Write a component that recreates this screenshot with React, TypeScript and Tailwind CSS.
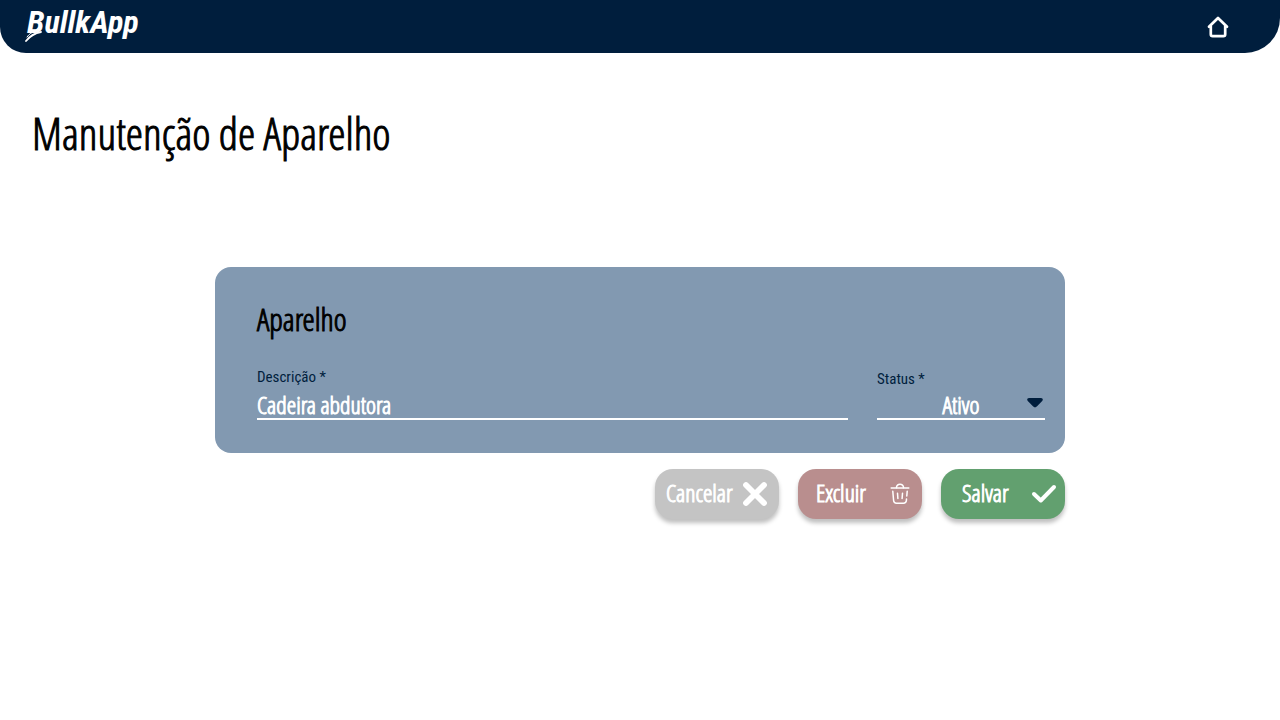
import type { ReactNode } from 'react';

function Logo() {
  return (
    <a
      href="#inicio"
      aria-label="BullkApp"
      className="relative block py-1 pl-[27px] font-['Roboto_Condensed',sans-serif] text-[32px] leading-9 font-bold text-white italic"
    >
      BullkApp
      <svg
        viewBox="0 0 28 14"
        className="absolute top-7 left-6 h-3.5 w-7"
        fill="none"
        stroke="currentColor"
        strokeLinecap="round"
        aria-hidden="true"
      >
        <path d="M17 4C11 5 6 8 2 13" strokeWidth="1.8" />
        <path d="M12 3C8 4 5 6 3 9" strokeWidth="1" />
      </svg>
    </a>
  );
}

function HomeIcon() {
  return (
    <svg
      viewBox="0 0 22 22"
      className="size-[22px]"
      fill="none"
      stroke="currentColor"
      strokeWidth="2.7"
      strokeLinecap="round"
      strokeLinejoin="round"
      aria-hidden="true"
    >
      <path d="M2 10.8L11 2l9 8.8" />
      <path d="M3.8 10v8.3c0 1.1.8 1.900 1.900 1.900h10.600c1.100 0 1.900-.8 1.900-1.900V10" />
    </svg>
  );
}

function CrossIcon() {
  return (
    <svg viewBox="0 0 26 26" className="size-[26px] shrink-0" fill="none" stroke="currentColor" strokeWidth="5.8" strokeLinecap="round" aria-hidden="true">
      <path d="M4 4l18 18M22 4L4 22" />
    </svg>
  );
}

function TrashIcon() {
  return (
    <svg viewBox="0 0 20 22" className="h-[22px] w-5 shrink-0" fill="none" stroke="currentColor" strokeWidth="1.5" strokeLinecap="round" strokeLinejoin="round" aria-hidden="true">
      <path d="M1.2 5.1h17.6" />
      <path d="M6.4 4.7C6.7 2.5 8 1.3 10 1.3s3.3 1.2 3.6 3.4" />
      <path d="M2.8 8.3l.8 9.2c.2 1.9 1.100 2.700 2.900 2.700h7c1.800 0 2.700-.8 2.900-2.700l.1-1.600" />
      <path d="M16.8 13l.4-4.7" />
      <path d="M7.5 10.3l.4 5.2M12.5 10.3l-.4 5.2" />
    </svg>
  );
}

function CheckIcon() {
  return (
    <svg viewBox="0 0 26 20" className="h-5 w-[26px] shrink-0" fill="none" stroke="currentColor" strokeWidth="4" strokeLinecap="round" strokeLinejoin="round" aria-hidden="true">
      <path d="M3 10l6.8 6.5L23 3" />
    </svg>
  );
}

function FieldLabel({ htmlFor, children }: { htmlFor: string; children: ReactNode }) {
  return (
    <label htmlFor={htmlFor} className="font-['Roboto_Condensed',sans-serif] text-[15px] leading-5 text-[#001e3d]">
      {children}
    </label>
  );
}

function ActionButton({ label, icon, className }: { label: string; icon: ReactNode; className: string }) {
  return (
    <button
      type="button"
      className={`flex h-[50px] w-[124px] items-center justify-between rounded-[18px] text-2xl text-white shadow-[0_4px_4px_rgba(0,0,0,0.25)] [-webkit-text-stroke:1px] ${className}`}
    >
      <span className="pb-0.5">{label}</span>
      {icon}
    </button>
  );
}

export default function App() {
  return (
    <div className="min-h-screen bg-white font-['Open_Sans_Condensed_Light','Roboto_Condensed',sans-serif] text-black">
      <header className="flex h-[53px] items-start justify-between rounded-br-[35px] rounded-bl-[26px] bg-[#001e3d] pr-[51px]">
        <Logo />
        <a href="#home" aria-label="Início" className="pt-4 text-white">
          <HomeIcon />
        </a>
      </header>

      <main className="px-8 pt-14">
        <h1 className="text-[44px] leading-12 [-webkit-text-stroke:1px]">Manutenção de Aparelho</h1>

        <form className="mx-auto mt-[110px] max-w-[850px]">
          <section className="rounded-2xl bg-[#8299b1] pt-9 pr-5 pb-[33px] pl-[42px]">
            <h2 className="text-[31px] leading-8 [-webkit-text-stroke:1px]">Aparelho</h2>
            <div className="mt-8 flex items-end gap-[29px]">
              <div className="flex grow flex-col">
                <FieldLabel htmlFor="descricao">Descrição *</FieldLabel>
                <input
                  id="descricao"
                  type="text"
                  defaultValue="Cadeira abdutora"
                  className="mt-1 h-[29px] w-full border-b-2 border-white bg-transparent text-2xl leading-6 text-white outline-none [-webkit-text-stroke:1px]"
                />
              </div>
              <div className="flex w-[168px] flex-col">
                <FieldLabel htmlFor="status">Status *</FieldLabel>
                <div className="relative mt-0.5">
                  <select
                    id="status"
                    defaultValue="Ativo"
                    className="block h-[29px] w-full appearance-none border-b-2 border-white bg-transparent text-center text-2xl leading-6 text-white outline-none [-webkit-text-stroke:1px]"
                  >
                    <option>Ativo</option>
                    <option>Inativo</option>
                  </select>
                  <svg viewBox="0 0 16 10" className="pointer-events-none absolute top-[7px] right-0.5 h-2.5 w-4 text-[#001e3d]" fill="currentColor" aria-hidden="true">
                    <path d="M2 0h12c1.7 0 2.4 1.8 1.2 2.9l-5.4 5.7c-1 1.1-2.6 1.1-3.6 0L.8 2.9C-.4 1.8.3 0 2 0z" />
                  </svg>
                </div>
              </div>
            </div>
          </section>

          <div className="mt-4 flex justify-end gap-[19px]">
            <ActionButton label="Cancelar" icon={<CrossIcon />} className="bg-[#c4c4c4] pr-[11px] pl-[11px]" />
            <ActionButton label="Excluir" icon={<TrashIcon />} className="bg-[#b98e8e] pr-3 pl-[18px]" />
            <ActionButton label="Salvar" icon={<CheckIcon />} className="bg-[#62a06f] pr-2 pl-[21px]" />
          </div>
        </form>
      </main>
    </div>
  );
}
